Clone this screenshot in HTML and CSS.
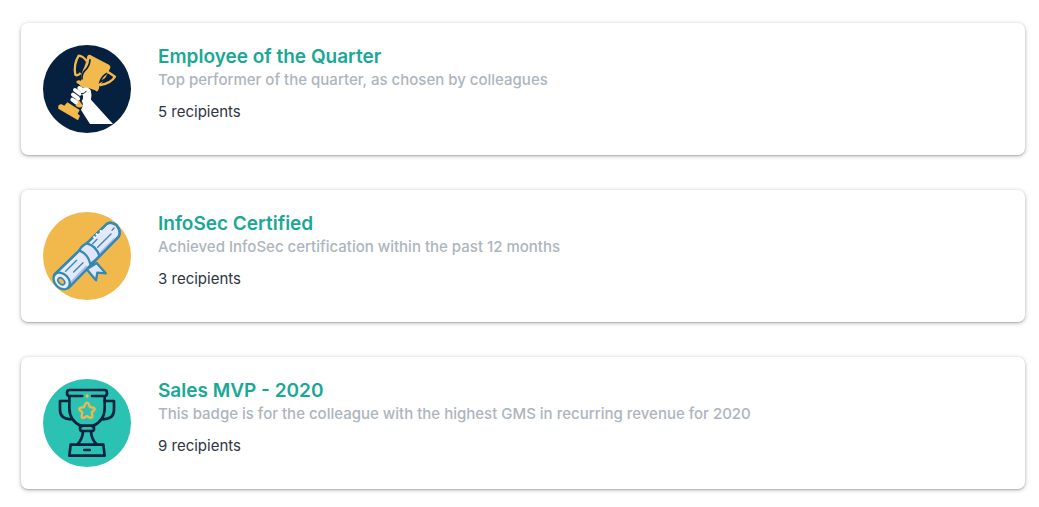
FILE: index.html
```html
<!DOCTYPE html>
<html lang="en">
<head>
<meta charset="utf-8">
<meta name="viewport" content="width=device-width, initial-scale=1">
<title>Badges</title>
<link rel="stylesheet" href="styles.css">
</head>
<body>
<main class="badges">
  <article class="card">
    <svg class="badge" viewBox="18 18 264 264" aria-hidden="true">
      <circle cx="150" cy="150" r="132" fill="#06213f"/>
      <path d="M151 51Q157 44 164 50L216 77Q223 82 218 91Q205 121 187 141Q187 148 184 153Q180 161 174 154Q158 146 135 145L125 135Q116 132 119 126Q126 122 132 126Q131 104 142 84Q149 67 151 51Z" fill="#f2b94d"/>
      <path d="M149 66Q138 51 125 50Q109 76 115 107Q121 112 131 102" fill="none" stroke="#f2b94d" stroke-width="7" stroke-linejoin="round"/>
      <path d="M212 98L234 113Q222 133 190 138L183 129" fill="none" stroke="#f2b94d" stroke-width="7" stroke-linejoin="round"/>
      <path d="M159 61Q158 83 144 94Q134 104 135 122M210 103Q195 111 189 129L220 112" fill="none" stroke="#06213f" stroke-width="5"/>
      <path d="M64 209Q62 195 74 196L82 200L91 190L128 213L122 224L129 230L123 244Z" fill="#f2b94d"/>
      <path d="M116 192Q108 187 117 180L127 185L138 200Q128 211 116 200Z" fill="#f2b94d"/>
      <path d="M134 148Q150 139 161 153Q165 166 162 182L228 255H159L132 213Q142 195 134 187Q144 171 132 162Z" fill="#fff"/>
      <g fill="none" stroke="#fff" stroke-linecap="round" stroke-width="12">
        <path d="M127 147L140 156M114 153L129 164M108 167L124 178M106 182L117 190"/>
      </g>
      <path d="M132 164Q144 165 148 156M128 176L134 180" fill="none" stroke="#06213f" stroke-width="3"/>
    </svg>
    <div class="details">
      <h2 class="title">Employee of the Quarter</h2>
      <p class="description">Top performer of the quarter, as chosen by colleagues</p>
      <p class="recipients">5 recipients</p>
    </div>
  </article>
  <article class="card">
    <svg class="badge" viewBox="18 18 264 264" aria-hidden="true">
      <circle cx="150" cy="150" r="132" fill="#f1b84c"/>
      <g stroke="#3489b3" stroke-width="7" stroke-linejoin="round" stroke-linecap="round">
        <path d="M149 190L177 223L181 200L206 202L179 171Z" fill="#dfe5fa"/>
        <path d="M52 206L209 54Q221 45 238 57Q254 75 245 92L94 246Z" fill="#e3e8fb"/>
        <path d="M235 99L180 153M151 181L96 238" fill="none" stroke="#a9bdf0" stroke-width="10" stroke-linecap="butt"/>
        <path d="M52 206L209 54Q221 45 238 57Q254 75 245 92L94 246" fill="none"/>
        <path d="M127 133Q133 119 149 112Q178 119 187 150Q176 164 160 174Q154 145 127 133Z" fill="#dfe5fa"/>
        <path d="M86 196L119 163M110 198L138 170M182 124L222 84M167 113L180 100M231 66L225 73" fill="none" stroke-width="4"/>
        <ellipse cx="74" cy="225" rx="21" ry="28" transform="rotate(-43 74 225)" fill="#e9edfc"/>
        <ellipse cx="73" cy="226" rx="8" ry="12" transform="rotate(-43 73 226)" fill="#f1b84c" stroke-width="5"/>
      </g>
      <path d="M169 91L175 97M177 83L182 88M189 73L193 77" stroke="#fff" stroke-width="6" fill="none"/>
    </svg>
    <div class="details">
      <h2 class="title">InfoSec Certified</h2>
      <p class="description">Achieved InfoSec certification within the past 12 months</p>
      <p class="recipients">3 recipients</p>
    </div>
  </article>
  <article class="card">
    <svg class="badge" viewBox="18 18 264 264" aria-hidden="true">
      <circle cx="150" cy="150" r="132" fill="#2bc1b3"/>
      <g fill="none" stroke="#08233f" stroke-width="8" stroke-linejoin="round" stroke-linecap="round">
        <path d="M136 69H97Q90 69 90 60Q90 51 97 51H203Q210 51 210 60Q210 69 203 69H165"/>
        <path d="M97 70V105C97 134 113 151 134 160M203 70V105C203 134 187 151 166 160"/>
        <path d="M97 84H69V111Q69 137 101 139M203 84H231V111Q231 137 199 139"/>
        <rect x="129" y="158" width="42" height="16" rx="7"/>
        <path d="M138 175Q137 198 121 214M162 175Q163 198 179 214M101 215H199L203 248H97Z"/>
        <path d="M142 231H158"/>
      </g>
      <path d="M150 89Q154 89 156 95L159 102L168 104Q176 106 172 111L164 118L166 128Q167 136 159 134L150 129L141 134Q133 136 134 128L136 118L128 111Q124 106 132 104L141 102L144 95Q146 89 150 89Z" fill="none" stroke="#f1b84c" stroke-width="7" stroke-linejoin="round"/>
      <circle cx="150" cy="69" r="5" fill="#f1b84c"/>
    </svg>
    <div class="details">
      <h2 class="title">Sales MVP - 2020</h2>
      <p class="description">This badge is for the colleague with the highest GMS in recurring revenue for 2020</p>
      <p class="recipients">9 recipients</p>
    </div>
  </article>
</main>
</body>
</html>
```
FILE: styles.css
```css
* {
  box-sizing: border-box;
}

body {
  margin: 0;
  background: #fff;
  color: #2d3540;
  font-family: Inter, "Liberation Sans", sans-serif;
  font-size: 15px;
  line-height: 24px;
}

.badges {
  display: flex;
  flex-direction: column;
  gap: 35px;
  padding: 23px 14px 18px 21px;
}

.card {
  display: flex;
  gap: 27px;
  padding: 22px;
  border-radius: 7px;
  background: #fff;
  box-shadow: 0 1px 4px rgba(0, 0, 0, 0.3), 0 1px 1px rgba(0, 0, 0, 0.12);
}

.badge {
  flex: none;
  width: 88px;
  height: 88px;
}

.title,
.description,
.recipients {
  margin: 0;
}

.title {
  color: #1aa896;
  font-size: 19px;
  font-weight: 600;
}

.description {
  color: #adb5bd;
  font-weight: 500;
  line-height: 22px;
}

.recipients {
  margin-top: 9px;
}
```
